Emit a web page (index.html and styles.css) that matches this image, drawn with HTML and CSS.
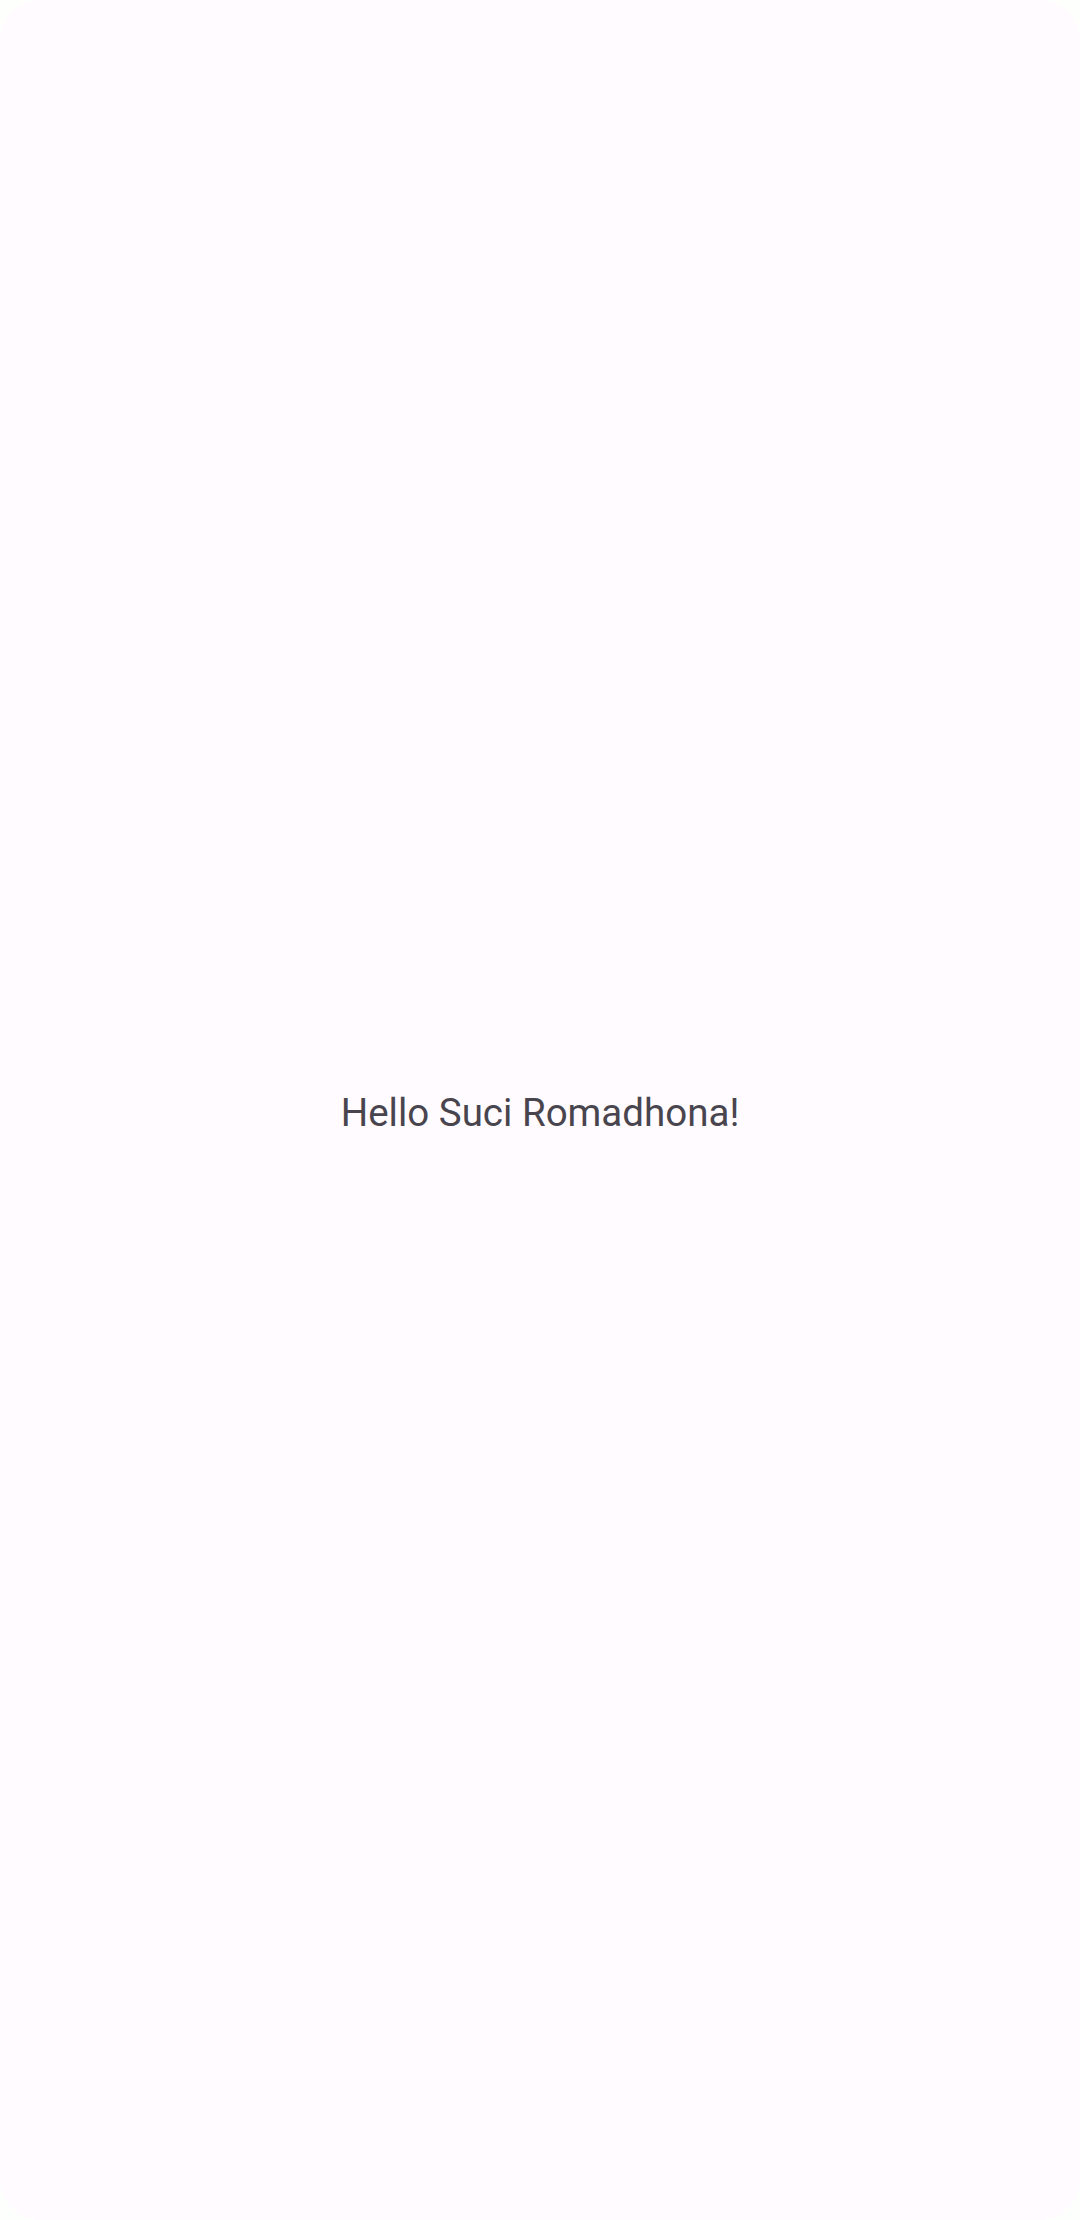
FILE: index.html
```html
<!DOCTYPE html>
<html>
<head>
<meta charset="utf-8">
<link rel="stylesheet" href="styles.css">
</head>
<body>
<div class="screen">
  <p class="greeting">Hello Suci Romadhona!</p>
</div>
</body>
</html>
```
FILE: styles.css
```css
html, body {
  margin: 0;
  padding: 0;
  background: #fdfffd;
}
.screen {
  width: 1080px;
  height: 2220px;
  background: #fffbfe;
  border-radius: 40px;
  display: flex;
  align-items: center;
  justify-content: center;
}
.greeting {
  margin: 0;
  padding-top: 6px;
  font-family: Roboto, "Liberation Sans", sans-serif;
  font-size: 38.5px;
  line-height: 56px;
  color: #49454f;
  letter-spacing: 0;
}
```
